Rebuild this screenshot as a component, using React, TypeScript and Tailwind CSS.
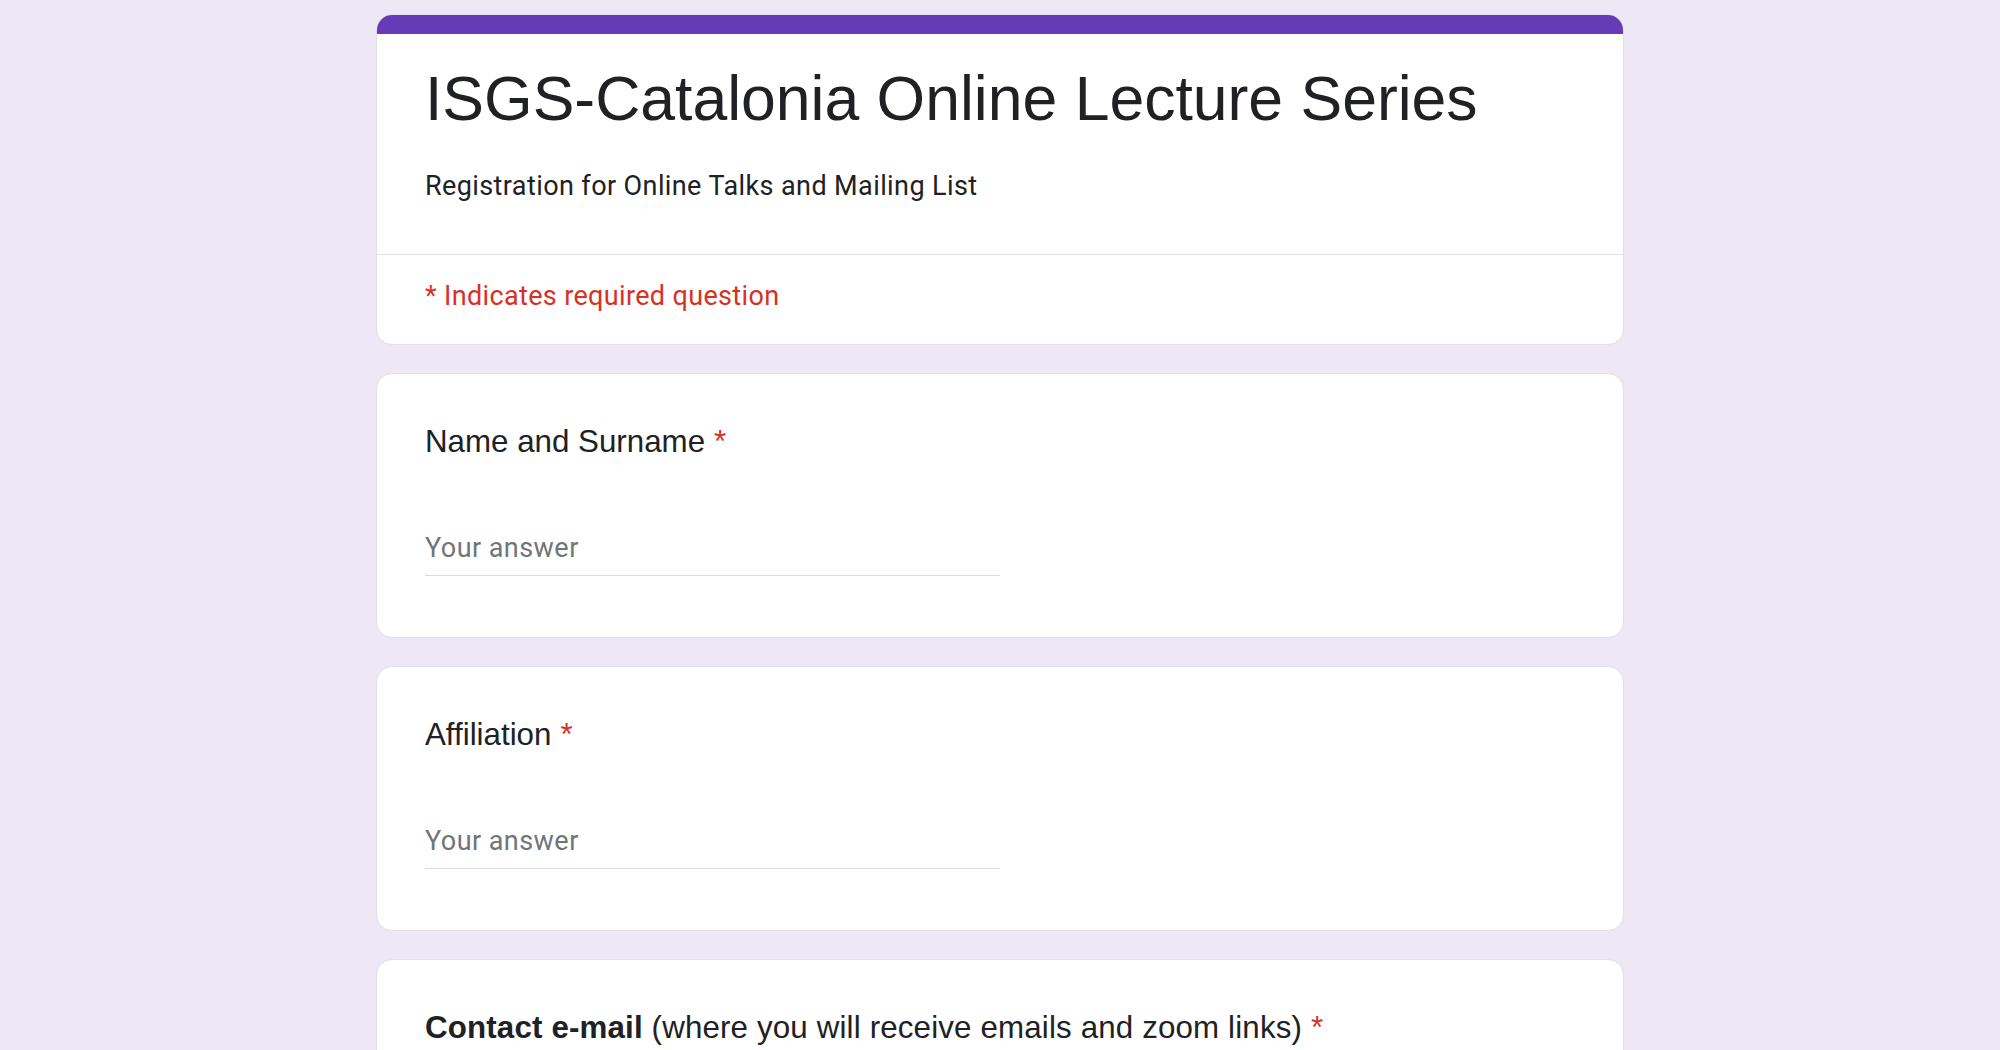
import React from "react";

const sans = { fontFamily: '"Liberation Sans", Arial, sans-serif' };
const roboto = { fontFamily: 'Roboto, "Liberation Sans", Arial, sans-serif' };

function Required() {
  return <span className="pl-[9px] text-[#d93025]">*</span>;
}

function AnswerField() {
  return (
    <div className="mt-[66px] w-[575px] border-b border-[#dadce0] pb-[7px]">
      <input
        type="text"
        placeholder="Your answer"
        className="w-full bg-transparent text-[27px] leading-[40px] tracking-[0.45px] text-[#202124] placeholder:text-[#70757a] outline-none"
        style={roboto}
      />
    </div>
  );
}

function QuestionCard({ children, wide = false }: { children: React.ReactNode; wide?: boolean }) {
  return (
    <div className="w-[1248px] rounded-[16px] border border-[#e2dfe8] bg-white px-[48px] pt-[48px] pb-[61px]">
      <div
        className={`text-[31.3px] leading-[40px] text-[#202124] ${wide ? "tracking-[0.15px]" : ""}`}
        style={sans}
      >
        {children}
      </div>
      <AnswerField />
    </div>
  );
}

export default function App() {
  return (
    <div className="min-h-screen w-full bg-[#ede7f6] flex flex-col items-center pt-[14px] pb-[40px] gap-[28px]">
      {/* Header card */}
      <div className="w-[1248px] rounded-[16px] overflow-hidden border border-[#e2dfe8] bg-white">
        <div className="h-[19px] bg-[#673ab7]" />
        <div className="px-[48px] pt-[26px] pb-[48px]">
          <div className="text-[62.5px] leading-[76px] text-[#202124]" style={sans}>
            ISGS-Catalonia Online Lecture Series
          </div>
          <div className="mt-[30px] text-[27px] leading-[40px] tracking-[0.4px] text-[#202124]" style={roboto}>
            Registration for Online Talks and Mailing List
          </div>
        </div>
        <div className="h-px bg-[#e2dfe8]" />
        <div className="px-[48px] pt-[21px] pb-[28px] text-[27px] leading-[40px] tracking-[0.35px] text-[#d93025]" style={roboto}>
          * Indicates required question
        </div>
      </div>

      <QuestionCard>
        Name and Surname
        <Required />
      </QuestionCard>

      <QuestionCard>
        Affiliation
        <Required />
      </QuestionCard>

      <QuestionCard wide>
        <span className="font-bold">Contact e-mail</span> (where you will receive emails and zoom links)
        <Required />
      </QuestionCard>
    </div>
  );
}
